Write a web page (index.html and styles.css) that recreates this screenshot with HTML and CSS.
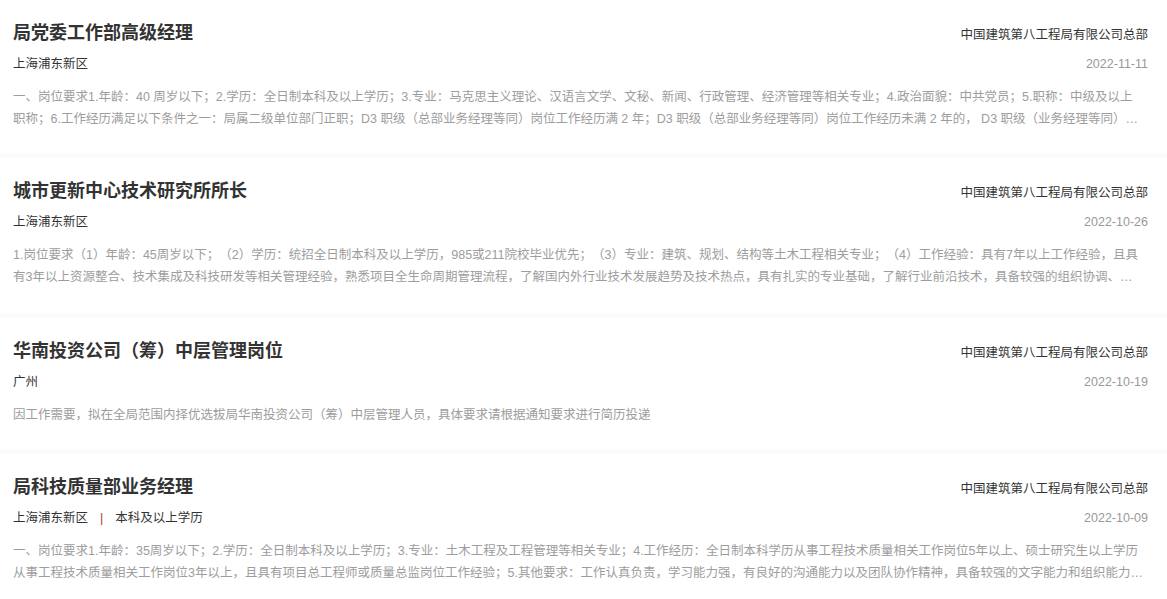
FILE: index.html
```html
<!DOCTYPE html>
<html lang="zh-CN">
<head>
  <meta charset="UTF-8" />
  <title>招聘岗位</title>
  <link rel="stylesheet" href="styles.css">
</head>
<body>
  <div class="job-list">

    <div class="job-card">
      <div class="job-row">
        <h3 class="job-title">局党委工作部高级经理</h3>
        <span class="job-company">中国建筑第八工程局有限公司总部</span>
      </div>
      <div class="job-row job-meta">
        <span class="job-place">上海浦东新区</span>
        <span class="job-date">2022-11-11</span>
      </div>
      <p class="job-desc">一、岗位要求1.年龄：40 周岁以下；2.学历：全日制本科及以上学历；3.专业：马克思主义理论、汉语言文学、文秘、新闻、行政管理、经济管理等相关专业；4.政治面貌：中共党员；5.职称：中级及以上职称；6.工作经历满足以下条件之一：局属二级单位部门正职；D3 职级（总部业务经理等同）岗位工作经历满 2 年；D3 职级（总部业务经理等同）岗位工作经历未满 2 年的， D3 职级（业务经理等同）岗位工作经历累计满 3 年。</p>
    </div>

    <div class="job-card">
      <div class="job-row">
        <h3 class="job-title">城市更新中心技术研究所所长</h3>
        <span class="job-company">中国建筑第八工程局有限公司总部</span>
      </div>
      <div class="job-row job-meta">
        <span class="job-place">上海浦东新区</span>
        <span class="job-date">2022-10-26</span>
      </div>
      <p class="job-desc">1.岗位要求（1）年龄：45周岁以下；（2）学历：统招全日制本科及以上学历，985或211院校毕业优先；（3）专业：建筑、规划、结构等土木工程相关专业；（4）工作经验：具有7年以上工作经验，且具有3年以上资源整合、技术集成及科技研发等相关管理经验，熟悉项目全生命周期管理流程，了解国内外行业技术发展趋势及技术热点，具有扎实的专业基础，了解行业前沿技术，具备较强的组织协调、沟通能力和团队管理能力。</p>
    </div>

    <div class="job-card">
      <div class="job-row">
        <h3 class="job-title">华南投资公司（筹）中层管理岗位</h3>
        <span class="job-company">中国建筑第八工程局有限公司总部</span>
      </div>
      <div class="job-row job-meta">
        <span class="job-place">广州</span>
        <span class="job-date">2022-10-19</span>
      </div>
      <p class="job-desc">因工作需要，拟在全局范围内择优选拔局华南投资公司（筹）中层管理人员，具体要求请根据通知要求进行简历投递</p>
    </div>

    <div class="job-card">
      <div class="job-row">
        <h3 class="job-title">局科技质量部业务经理</h3>
        <span class="job-company">中国建筑第八工程局有限公司总部</span>
      </div>
      <div class="job-row job-meta">
        <span class="job-place">上海浦东新区<span class="sep">|</span>本科及以上学历</span>
        <span class="job-date">2022-10-09</span>
      </div>
      <p class="job-desc">一、岗位要求1.年龄：35周岁以下；2.学历：全日制本科及以上学历；3.专业：土木工程及工程管理等相关专业；4.工作经历：全日制本科学历从事工程技术质量相关工作岗位5年以上、硕士研究生以上学历从事工程技术质量相关工作岗位3年以上，且具有项目总工程师或质量总监岗位工作经验；5.其他要求：工作认真负责，学习能力强，有良好的沟通能力以及团队协作精神，具备较强的文字能力和组织能力、协调能力，能够承担项目质量管理及技术创新工作。</p>
    </div>

  </div>
</body>
</html>
```

FILE: styles.css
```css
* {
  box-sizing: border-box;
  margin: 0;
  padding: 0;
  font-family: 'Liberation Sans', 'Noto Sans CJK SC', sans-serif;
  text-spacing-trim: space-all;
}

body {
  background-color: #fff;
}

.job-list {
  display: flex;
  flex-direction: column;
  gap: 5px;
  background-color: #fbfbfb;
}

.job-card {
  background-color: #fff;
  padding: 20px 19px 23px 13px;
}

.job-card:nth-child(2) {
  padding-bottom: 25px;
}

.job-row {
  display: flex;
  justify-content: space-between;
  align-items: center;
}

.job-title {
  font-size: 18px;
  line-height: 26px;
  font-weight: 700;
  color: #333;
}

.job-company {
  font-size: 12.5px;
  color: #333;
}

.job-meta {
  margin-top: 8px;
  line-height: 20px;
  font-size: 12.5px;
}

.job-place {
  color: #333;
}

.sep {
  color: #a33a36;
  margin: 0 12px;
}

.job-date {
  color: #999;
}

.job-desc {
  margin: 12px 4px 0 0;
  font-size: 12.5px;
  line-height: 22px;
  color: #9d9d9d;
  display: -webkit-box;
  -webkit-line-clamp: 2;
  -webkit-box-orient: vertical;
  overflow: hidden;
}
```
